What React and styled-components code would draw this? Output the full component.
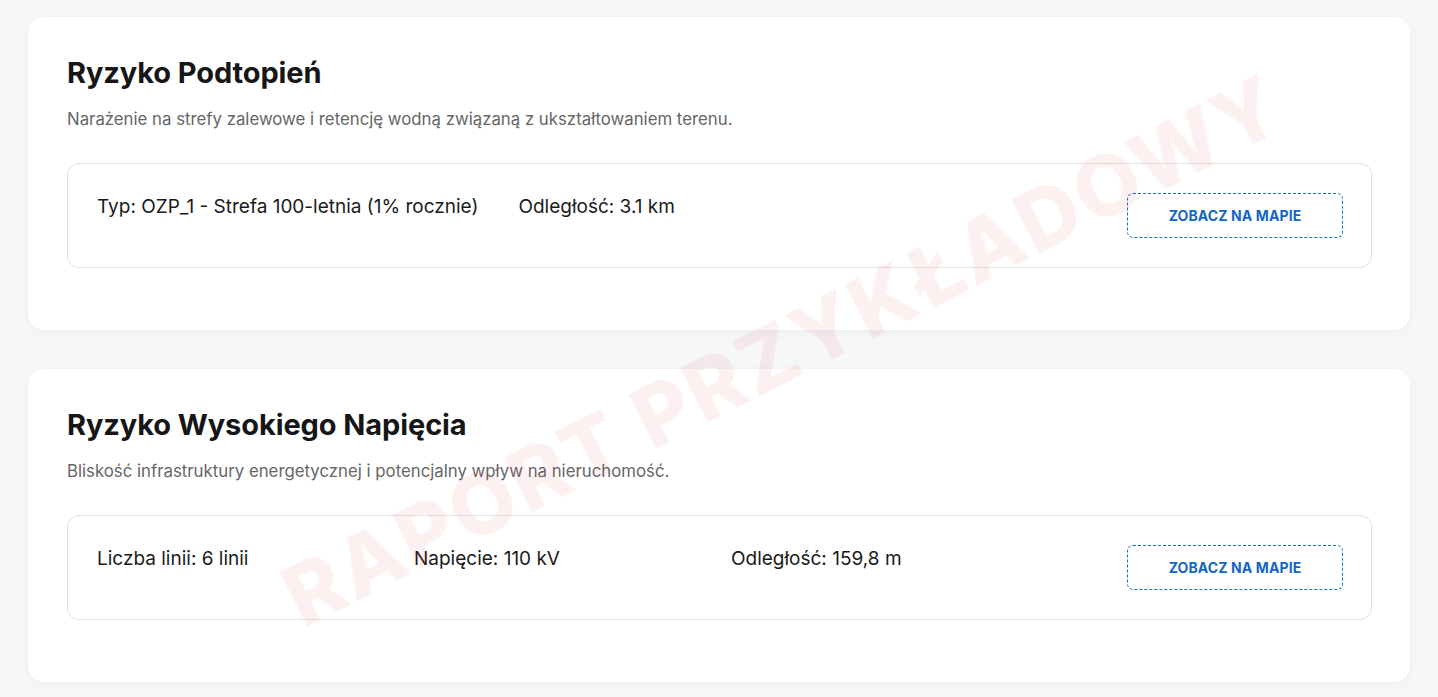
import styled, { createGlobalStyle } from "styled-components";

const GlobalStyle = createGlobalStyle`
  html, body {
    margin: 0;
    padding: 0;
    background: #f6f7f9;
    font-family: Inter, "Noto Sans", sans-serif;
    color: #1a1a1a;
  }
  * { box-sizing: border-box; }
`;

const Page = styled.main`
  padding: 17px 28px 40px;
  display: flex;
  flex-direction: column;
  gap: 39px;
`;

const Card = styled.section`
  background: #ffffff;
  border-radius: 16px;
  box-shadow: 0 2px 12px rgba(15, 23, 42, 0.04);
  padding: 38px 38px 62px 39px;
`;

const Title = styled.h2`
  margin: 0;
  font-size: 29px;
  line-height: 36px;
  font-weight: 700;
  color: #161616;
  letter-spacing: -0.1px;
`;

const Description = styled.p`
  margin: 17px 0 0;
  font-size: 16.8px;
  line-height: 22px;
  color: #666666;
`;

const InfoBox = styled.div`
  margin-top: 33px;
  border: 1px solid #e2e2e2;
  border-radius: 12px;
  padding: 29px 28px 29px 29px;
  display: flex;
  align-items: flex-start;
  gap: 40px;
`;

const InfoItem = styled.div`
  min-width: 277px;
  font-size: 19px;
  line-height: 26px;
  padding-top: 1px;
  color: #1a1a1a;
`;

const MapButton = styled.button`
  margin-left: auto;
  width: 216px;
  height: 45px;
  border: 1px dashed #1a6fd1;
  border-radius: 6px;
  background: #ffffff;
  color: #1565c8;
  font-family: Inter, "Noto Sans", sans-serif;
  font-size: 14px;
  font-weight: 700;
  letter-spacing: 0.1px;
  text-transform: uppercase;
  cursor: pointer;
`;

const Watermark = styled.div`
  position: fixed;
  left: 783px;
  top: 350px;
  transform: translate(-50%, -50%) rotate(-27deg);
  font-family: Inter, "Noto Sans", sans-serif;
  font-weight: 800;
  font-size: 84px;
  letter-spacing: 3px;
  white-space: nowrap;
  color: rgba(230, 40, 50, 0.07);
  pointer-events: none;
  user-select: none;
`;

const sections = [
  {
    title: "Ryzyko Podtopień",
    description:
      "Narażenie na strefy zalewowe i retencję wodną związaną z ukształtowaniem terenu.",
    items: ["Typ: OZP_1 - Strefa 100-letnia (1% rocznie)", "Odległość: 3.1 km"],
  },
  {
    title: "Ryzyko Wysokiego Napięcia",
    description:
      "Bliskość infrastruktury energetycznej i potencjalny wpływ na nieruchomość.",
    items: ["Liczba linii: 6 linii", "Napięcie: 110 kV", "Odległość: 159,8 m"],
  },
];

export default function App() {
  return (
    <>
      <GlobalStyle />
      <Page>
        {sections.map((section) => (
          <Card key={section.title}>
            <Title>{section.title}</Title>
            <Description>{section.description}</Description>
            <InfoBox>
              {section.items.map((item) => (
                <InfoItem key={item}>{item}</InfoItem>
              ))}
              <MapButton>Zobacz na mapie</MapButton>
            </InfoBox>
          </Card>
        ))}
      </Page>
      <Watermark>RAPORT PRZYKŁADOWY</Watermark>
    </>
  );
}
